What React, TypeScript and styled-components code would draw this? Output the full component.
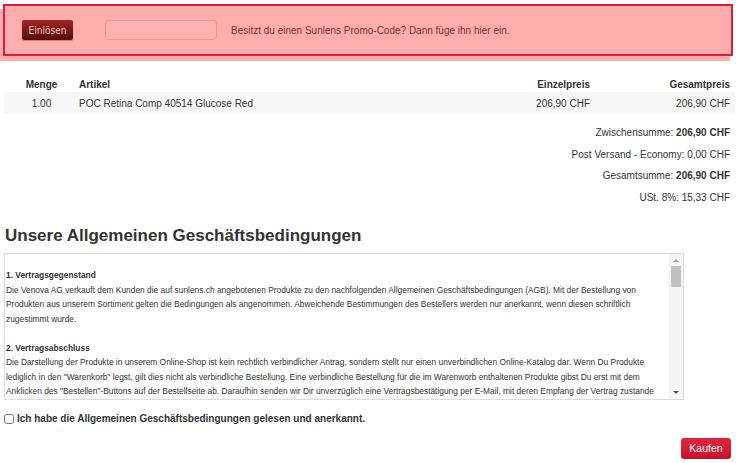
import React from 'react';
import styled, { createGlobalStyle } from 'styled-components';

const GlobalStyle = createGlobalStyle`
  html, body {
    margin: 0;
    padding: 0;
    background: #ffffff;
  }
  body {
    font-family: "Liberation Sans", Arial, sans-serif;
    font-size: 10px;
    color: #333333;
  }
  * {
    box-sizing: border-box;
  }
`;

const Page = styled.div`
  width: 740px;
  padding: 4px 5px 0 4px;
`;

const PromoBox = styled.div`
  display: flex;
  align-items: center;
  height: 52px;
  margin-left: -1px;
  margin-right: 2px;
  padding: 0 0 0 17px;
  background: #ffadad;
  border: 2px solid #e5173a;
  box-shadow: -3px 5px 0 #ffadad;
`;

const RedeemButton = styled.button`
  width: 51px;
  height: 20px;
  padding: 0;
  border: none;
  border-radius: 2px;
  background: linear-gradient(#9e2727, #5a0909);
  box-shadow: 0 1px 1px rgba(0, 0, 0, 0.25);
  color: #f4c4c4;
  font-family: "DejaVu Sans Condensed", "DejaVu Sans", sans-serif;
  font-stretch: condensed;
  font-size: 10px;
  cursor: pointer;
`;

const CodeInput = styled.input`
  width: 112px;
  height: 20px;
  margin-left: 32px;
  border: 1px solid #f19595;
  border-radius: 4px;
  background: #ffb3b3;
  outline: none;
`;

const PromoText = styled.span`
  margin-left: 14px;
  color: #862d2d;
  font-size: 10px;
`;

const Cart = styled.div`
  margin-top: 20px;
`;

const CartRow = styled.div<{ $shaded?: boolean }>`
  display: grid;
  grid-template-columns: 75px 1fr 140px 140px;
  align-items: center;
  height: ${(p) => (p.$shaded ? '22px' : '16px')};
  background: ${(p) => (p.$shaded ? '#f7f7f7' : 'transparent')};
`;

const Cell = styled.div<{ $align?: 'left' | 'center' | 'right'; $bold?: boolean }>`
  text-align: ${(p) => p.$align ?? 'left'};
  font-weight: ${(p) => (p.$bold ? 'bold' : 'normal')};
  padding-right: ${(p) => (p.$align === 'right' ? '5px' : '0')};
`;

const Totals = styled.div`
  display: flex;
  flex-direction: column;
  align-items: flex-end;
  gap: 7.5px;
  margin-top: 12px;
  padding-right: 5px;
  line-height: 14px;
`;

const Heading = styled.h2`
  margin: 20px 0 0 1px;
  font-size: 17px;
  font-weight: bold;
  color: #333333;
  line-height: 22px;
`;

const TermsBox = styled.div`
  display: flex;
  width: 680px;
  height: 147px;
  margin-top: 6px;
  border: 1px solid #dcdcdc;
`;

const TermsContent = styled.div`
  flex: 1;
  overflow: hidden;
  padding: 0 0 0 1px;
  font-family: "Liberation Sans", Arial, sans-serif;
  font-size: 8.4px;
  line-height: 14.5px;
  color: #333333;
`;

const TermsParagraph = styled.p`
  margin: 14.5px 0;
`;

const TermsTitle = styled.strong`
  font-weight: bold;
`;

const ScrollTrack = styled.div`
  display: flex;
  flex-direction: column;
  align-items: center;
  width: 14px;
  padding: 5px 0 5px;
  background: #f5f5f5;
`;

const Arrow = styled.div<{ $dir: 'up' | 'down' }>`
  width: 0;
  height: 0;
  border-left: 3px solid transparent;
  border-right: 3px solid transparent;
  ${(p) =>
    p.$dir === 'up'
      ? 'border-bottom: 3px solid #a3a3a3;'
      : 'border-top: 3px solid #505050;'}
`;

const Thumb = styled.div`
  width: 10px;
  height: 21px;
  margin-top: 4px;
  background: #c1c1c1;
`;

const TrackSpacer = styled.div`
  flex: 1;
`;

const AcceptLabel = styled.label`
  display: flex;
  align-items: center;
  gap: 3px;
  height: 14px;
  margin-top: 12px;
  font-weight: bold;
  font-size: 10px;
  color: #333333;
`;

const AcceptBox = styled.input`
  width: 10px;
  height: 10px;
  margin: 0;
`;

const Footer = styled.div`
  display: flex;
  justify-content: flex-end;
  margin-top: 12px;
  padding-right: 4px;
`;

const BuyButton = styled.button`
  width: 50px;
  height: 21px;
  padding: 0;
  border: none;
  border-radius: 3px;
  background: linear-gradient(#e2243e, #c8102b);
  color: #ffffff;
  font-family: "Liberation Sans", Arial, sans-serif;
  font-size: 10.5px;
  cursor: pointer;
`;

const items = [
  { qty: '1.00', name: 'POC Retina Comp 40514 Glucose Red', unit: '206,90 CHF', total: '206,90 CHF' },
];

const terms = [
  {
    title: '1. Vertragsgegenstand',
    text:
      'Die Venova AG verkauft dem Kunden die auf sunlens.ch angebotenen Produkte zu den nachfolgenden Allgemeinen Geschäftsbedingungen (AGB). Mit der Bestellung von Produkten aus unserem Sortiment gelten die Bedingungen als angenommen. Abweichende Bestimmungen des Bestellers werden nur anerkannt, wenn diesen schriftlich zugestimmt wurde.',
  },
  {
    title: '2. Vertragsabschluss',
    text:
      'Die Darstellung der Produkte in unserem Online-Shop ist kein rechtlich verbindlicher Antrag, sondern stellt nur einen unverbindlichen Online-Katalog dar. Wenn Du Produkte lediglich in den "Warenkorb" legst, gilt dies nicht als verbindliche Bestellung. Eine verbindliche Bestellung für die im Warenworb enthaltenen Produkte gibst Du erst mit dem Anklicken des "Bestellen"-Buttons auf der Bestellseite ab. Daraufhin senden wir Dir unverzüglich eine Vertragsbestätigung per E-Mail, mit deren Empfang der Vertrag zustande kommt.',
  },
  {
    title: '3. Preise',
    text:
      'Alle Preise verstehen sich in Schweizer Franken (CHF) inklusive der gesetzlichen Mehrwertsteuer. Versandkosten werden separat ausgewiesen.',
  },
];

export default function App() {
  return (
    <>
      <GlobalStyle />
      <Page>
        <PromoBox>
          <RedeemButton>Einlösen</RedeemButton>
          <CodeInput type="text" />
          <PromoText>Besitzt du einen Sunlens Promo-Code? Dann füge ihn hier ein.</PromoText>
        </PromoBox>

        <Cart>
          <CartRow>
            <Cell $align="center" $bold>Menge</Cell>
            <Cell $bold>Artikel</Cell>
            <Cell $align="right" $bold>Einzelpreis</Cell>
            <Cell $align="right" $bold>Gesamtpreis</Cell>
          </CartRow>
          {items.map((item) => (
            <CartRow $shaded key={item.name}>
              <Cell $align="center">{item.qty}</Cell>
              <Cell>{item.name}</Cell>
              <Cell $align="right">{item.unit}</Cell>
              <Cell $align="right">{item.total}</Cell>
            </CartRow>
          ))}
        </Cart>

        <Totals>
          <span>Zwischensumme: <b>206,90 CHF</b></span>
          <span>Post Versand - Economy: 0,00 CHF</span>
          <span>Gesamtsumme: <b>206,90 CHF</b></span>
          <span>USt. 8%: 15,33 CHF</span>
        </Totals>

        <Heading>Unsere Allgemeinen Geschäftsbedingungen</Heading>

        <TermsBox>
          <TermsContent>
            {terms.map((t) => (
              <TermsParagraph key={t.title}>
                <TermsTitle>{t.title}</TermsTitle>
                <br />
                {t.text}
              </TermsParagraph>
            ))}
          </TermsContent>
          <ScrollTrack>
            <Arrow $dir="up" />
            <Thumb />
            <TrackSpacer />
            <Arrow $dir="down" />
          </ScrollTrack>
        </TermsBox>

        <AcceptLabel>
          <AcceptBox type="checkbox" />
          Ich habe die Allgemeinen Geschäftsbedingungen gelesen und anerkannt.
        </AcceptLabel>

        <Footer>
          <BuyButton>Kaufen</BuyButton>
        </Footer>
      </Page>
    </>
  );
}
